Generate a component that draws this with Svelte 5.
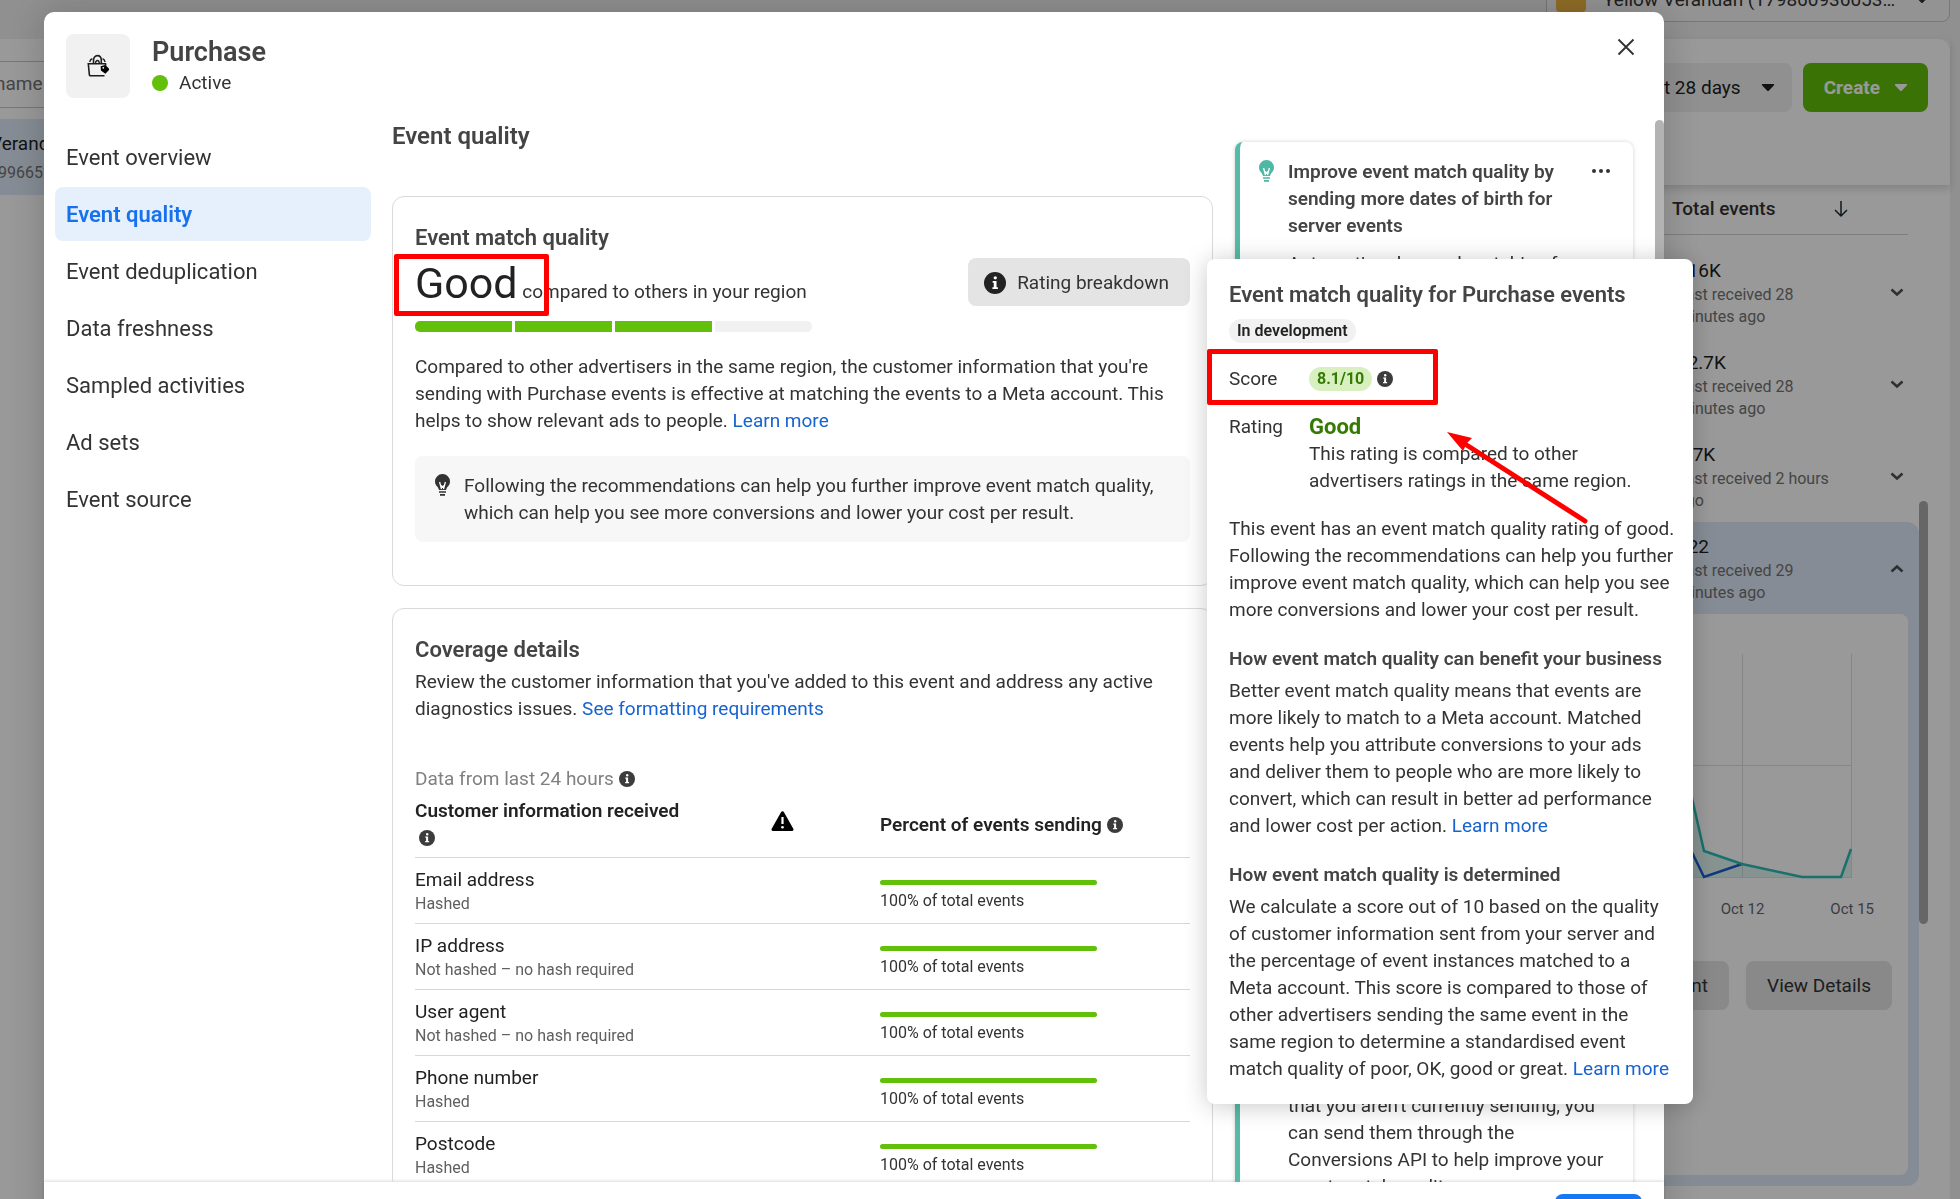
<script>
  const navItems = [
    'Event overview',
    'Event quality',
    'Event deduplication',
    'Data freshness',
    'Sampled activities',
    'Ad sets',
    'Event source',
  ]

  const coverage = [
    { name: 'Email address', note: 'Hashed', percent: 100 },
    { name: 'IP address', note: 'Not hashed – no hash required', percent: 100 },
    { name: 'User agent', note: 'Not hashed – no hash required', percent: 100 },
    { name: 'Phone number', note: 'Hashed', percent: 100 },
    { name: 'Postcode', note: 'Hashed', percent: 100 },
  ]

  const totals = [
    { count: '116K', received: 'Last received 28 minutes ago' },
    { count: '12.7K', received: 'Last received 28 minutes ago' },
    { count: '1.7K', received: 'Last received 2 hours ago' },
  ]

  let active = $state('Event quality')
</script>

{#snippet info(size = 16)}
  <svg class="info" width={size} height={size} viewBox="0 0 16 16" aria-hidden="true">
    <circle cx="8" cy="8" r="8" fill="currentColor" />
    <circle cx="8.2" cy="4.2" r="1.2" fill="#fff" />
    <path d="M6.3 6.6h2.8v4.5h1v1.2H6.1v-1.2h1V7.8h-.8z" fill="#fff" />
  </svg>
{/snippet}

{#snippet bulb()}
  <svg class="bulb" width="15" height="22" viewBox="0 0 15 22" aria-hidden="true">
    <path d="M7.5 0A7.4 7.4 0 0 0 0 7.4c0 2.800 1.500 4.600 3 6l1 2.600h7l1-2.600c1.500-1.400 3-3.200 3-6A7.400 7.400 0 0 0 7.500 0z" fill="currentColor" />
    <path d="M4.600 8l1.900 7.200M10.400 8l-1.900 7.200M6 11.500l1.500 1.500L9 11.500" fill="none" stroke="#fff" stroke-width="1.300" />
    <path d="M4 18h7M5 20.800h5" fill="none" stroke="currentColor" stroke-width="1.700" />
  </svg>
{/snippet}

{#snippet caret()}
  <svg width="14" height="9" viewBox="0 0 14 9" aria-hidden="true">
    <path d="M1.500 1h11a.8.8 0 0 1 .5 1.300L8 7.600a1.400 1.400 0 0 1-2 0L1 2.300A.8.8 0 0 1 1.500 1z" fill="currentColor" />
  </svg>
{/snippet}

{#snippet chevron(up = false)}
  <svg class="chevron" class:up width="14" height="9" viewBox="0 0 14 9" aria-hidden="true">
    <path d="M1.500 1.500L7 6.500l5.500-5" fill="none" stroke="#4b4f56" stroke-width="2.500" />
  </svg>
{/snippet}

<div class="page">
  <div class="sources">
    <div class="search">name or ID</div>
    <div class="source">
      <div class="source-name">Verandah</div>
      <div class="source-id">9966529</div>
    </div>
  </div>

  <div class="side">
    <button class="account">
      <span class="avatar"></span>
      <span class="account-name">Yellow Verandah (179860936053…</span>
      {@render caret()}
    </button>

    <div class="panel">
      <div class="toolbar">
        <button class="range">Last 28 days {@render caret()}</button>
        <button class="create">Create {@render caret()}</button>
      </div>

      <div class="list">
        <div class="list-head">
          Total events
          <svg width="14" height="18" viewBox="0 0 14 18" aria-hidden="true">
            <path d="M7 1v15M1 10l6 6 6-6" fill="none" stroke="#1c2b33" stroke-width="1.500" />
          </svg>
        </div>
        {#each totals as row}
          <div class="total">
            <div>
              <div class="count">{row.count}</div>
              <div class="received">{row.received}</div>
            </div>
            {@render chevron()}
          </div>
        {/each}
        <div class="expanded">
          <div class="total">
            <div>
              <div class="count">122</div>
              <div class="received">Last received 29 minutes ago</div>
            </div>
            {@render chevron(true)}
          </div>
          <div class="detail">
            <svg class="chart" width="240" height="226" viewBox="0 0 240 226" aria-hidden="true">
              <path d="M120.500 0v224M229.500 0v224M0 111.500h230M0 223.500h230" stroke="#dcdfe3" fill="none" stroke-width="1" />
              <path d="M60 100L82 197l38 13 60 13h39l10-28v28H60z" fill="#2abba7" opacity=".15" />
              <path d="M60 178L82 223l38-13" fill="none" stroke="#1a5fd0" stroke-width="2.500" />
              <path d="M60 100L82 197l38 13 60 13h39l10-28" fill="none" stroke="#2abbb4" stroke-width="2.500" />
            </svg>
            <div class="ticks"><span>Oct 12</span><span>Oct 15</span></div>
            <div class="detail-actions">
              <button>Test event</button>
              <button>View Details</button>
            </div>
          </div>
        </div>
      </div>
      <div class="panel-thumb"></div>
    </div>
  </div>
</div>

<div class="overlay">
  <div class="modal" role="dialog" aria-label="Purchase">
    <header>
      <div class="event-icon">
        <svg width="22" height="24" viewBox="0 0 22 24" fill="none" stroke="#1c1e21" stroke-width="1.600" aria-hidden="true">
          <path d="M17.500 21.800H3.400a1 1 0 0 1-1-.8L1.300 9.800h17.200l.2 1.700" />
          <path d="M6.500 9.800V6.500c0-3 1.600-4.900 3.900-4.900s3.900 1.900 3.900 4.900v3.300" />
          <path d="M8.500 9.500c.2-4 3.600-4 3.800 0M2.800 8c.3-1.800 1.200-3 2.600-3.300M15.500 4.700c1.400.3 2.200 1.500 2.600 3.300" stroke-width="1.400" />
          <path d="M14.500 12.800l3.700-.8 3.300 3.400-3.200 3.200-3.600-2.600z" fill="#000" stroke="#000" />
          <circle cx="16.300" cy="13.800" r=".9" fill="#fff" stroke="none" />
        </svg>
      </div>
      <div class="event-title">
        <h1>Purchase</h1>
        <div class="status"><span class="dot"></span>Active</div>
      </div>
      <button class="close" aria-label="Close">
        <svg width="18" height="18" viewBox="0 0 18 18" aria-hidden="true">
          <path d="M1.500 1.500l15 15M16.500 1.500l-15 15" stroke="#333" stroke-width="1.900" />
        </svg>
      </button>
    </header>

    <div class="body">
      <nav>
        {#each navItems as item}
          <button class:active={item === active} onclick={() => (active = item)}>{item}</button>
        {/each}
      </nav>

      <main>
        <h2>Event quality</h2>

        <section class="card match">
          <h3>Event match quality</h3>
          <div class="rating">
            <p><span class="grade">Good</span> compared to others in your region</p>
            <button class="breakdown">{@render info(22)} Rating breakdown</button>
            <span class="mark mark-grade"></span>
          </div>
          <div class="meter"><i class="on"></i><i class="on"></i><i class="on"></i><i></i></div>
          <p class="summary">
            Compared to other advertisers in the same region, the customer information that you're
            sending with Purchase events is effective at matching the events to a Meta account. This
            helps to show relevant ads to people. <a href="#learn">Learn more</a>
          </p>
          <div class="tip">
            {@render bulb()}
            <p>
              Following the recommendations can help you further improve event match quality, which
              can help you see more conversions and lower your cost per result.
            </p>
          </div>
        </section>

        <section class="card">
          <h3>Coverage details</h3>
          <p class="intro">
            Review the customer information that you've added to this event and address any active
            diagnostics issues. <a href="#format">See formatting requirements</a>
          </p>
          <p class="period">Data from last 24 hours {@render info()}</p>
          <table>
            <thead>
              <tr>
                <th class="col-name">Customer information received <span class="th-info">{@render info()}</span></th>
                <th class="col-warn" aria-label="Warnings">
                  <svg width="23" height="20" viewBox="0 0 23 20" aria-hidden="true">
                    <path d="M10 1.200a1.700 1.700 0 0 1 3 0l9.300 16.500a1.500 1.500 0 0 1-1.300 2.300H2a1.500 1.500 0 0 1-1.300-2.300z" fill="#000" />
                    <path d="M11.500 6v7" stroke="#fff" stroke-width="2.200" />
                    <circle cx="11.500" cy="16.200" r="1.300" fill="#fff" />
                  </svg>
                </th>
                <th>Percent of events sending {@render info()}</th>
              </tr>
            </thead>
            <tbody>
              {#each coverage as row}
                <tr>
                  <td>
                    <div class="name">{row.name}</div>
                    <div class="note">{row.note}</div>
                  </td>
                  <td></td>
                  <td class="share">
                    <div class="track"><div class="fill" style="width: {row.percent}%"></div></div>
                    <div class="percent">{row.percent}% of total events</div>
                  </td>
                </tr>
              {/each}
            </tbody>
          </table>
        </section>
      </main>

      <aside>
        {@render bulb()}
        <div class="advice">
          <h4>Improve event match quality by sending more dates of birth for server events</h4>
          <p>Automatic advanced matching for businesses</p>
          <p class="later">
            that you aren't currently sending, you can send them through the Conversions API to help
            improve your event match quality.
          </p>
        </div>
        <button class="more" aria-label="More">
          <svg width="18" height="4" viewBox="0 0 18 4" fill="#333" aria-hidden="true">
            <circle cx="2" cy="2" r="2" /><circle cx="9" cy="2" r="2" /><circle cx="16" cy="2" r="2" />
          </svg>
        </button>
      </aside>
      <div class="thumb"></div>
    </div>

    <footer><button class="done">Done</button></footer>

    <div class="popover">
      <h3>Event match quality for Purchase events</h3>
      <span class="badge">In development</span>
      <dl>
        <dt class="score">Score</dt>
        <dd class="score"><span class="pill">8.1/10</span>{@render info()}</dd>
        <dt>Rating</dt>
        <dd>
          <strong>Good</strong>
          <p>This rating is compared to other advertisers ratings in the same region.</p>
        </dd>
      </dl>
      <p class="lead">
        This event has an event match quality rating of good. Following the recommendations can help
        you further improve event match quality, which can help you see more conversions and lower
        your cost per result.
      </p>
      <h4>How event match quality can benefit your business</h4>
      <p>
        Better event match quality means that events are more likely to match to a Meta account.
        Matched events help you attribute conversions to your ads and deliver them to people who are
        more likely to convert, which can result in better ad performance and lower cost per action.
        <a href="#benefit">Learn more</a>
      </p>
      <h4>How event match quality is determined</h4>
      <p>
        We calculate a score out of 10 based on the quality of customer information sent from your
        server and the percentage of event instances matched to a Meta account. This score is
        compared to those of other advertisers sending the same event in the same region to
        determine a standardised event match quality of poor, OK, good or great.
        <a href="#determined">Learn more</a>
      </p>
      <span class="mark mark-score"></span>
      <svg class="arrow" width="144" height="98" viewBox="0 0 144 98" aria-hidden="true">
        <path d="M18 14L138 91" stroke="#f00" stroke-width="5" stroke-linecap="round" />
        <path d="M0 2L25 8 20 13 16 21z" fill="#f00" />
      </svg>
    </div>
  </div>
</div>

<style>
  :global(body) {
    overflow: hidden;
    background: #f0f0f0;
    color: #333;
    font-family: Roboto, 'Liberation Sans', sans-serif;
    font-size: 19px;
    line-height: 27px;
  }

  h1, h2, h3, h4, p, dl, dd {
    margin: 0;
  }

  h1, h2, h3, h4, th {
    font-weight: 600;
    color: #444;
  }

  h3 {
    font-size: 22px;
  }

  h4 {
    font-size: 19px;
  }

  a {
    color: #1763cf;
    text-decoration: none;
  }

  button {
    padding: 0;
    border: none;
    background: none;
    color: inherit;
    font: inherit;
    cursor: pointer;
  }

  .info {
    color: #3c3c3c;
    vertical-align: -2px;
  }

  /* page behind the dialog */
  .page {
    display: flex;
    justify-content: space-between;
    height: 100vh;
    overflow: hidden;
  }

  .sources {
    width: 200px;
    margin-top: 39px;
    padding-top: 22px;
    background: #fff;
    white-space: nowrap;
  }

  .search {
    height: 45px;
    line-height: 43px;
    border: 1px solid #c4c6c9;
    border-width: 1px 0;
    color: #737373;
    text-indent: -5px;
  }

  .source {
    height: 76px;
    margin-top: 11px;
    padding-top: 11px;
    box-sizing: border-box;
    background: #dfeaf8;
    text-indent: -10px;
    color: #1c1e21;
  }

  .source-id {
    margin-top: 2px;
    color: #737373;
    font-size: 16px;
    text-indent: -2px;
  }

  .side {
    display: flex;
    flex-direction: column;
    width: 404px;
    margin-right: 10px;
  }

  .account {
    display: flex;
    flex: none;
    align-items: center;
    gap: 17px;
    height: 46px;
    margin-top: -24px;
    padding: 0 20px 0 9px;
    box-sizing: border-box;
    border: 1px solid #c4c6c9;
    border-radius: 8px;
    background: #f6f6f6;
  }

  .avatar {
    width: 30px;
    height: 26px;
    border-radius: 4px;
    background: #f0b642;
  }

  .account-name {
    flex: 1;
    text-align: left;
    white-space: nowrap;
  }

  .panel {
    position: relative;
    flex: 1;
    margin-top: 17px;
    border-radius: 0 12px 0 0;
    background: #fff;
  }

  .toolbar {
    display: flex;
    justify-content: flex-end;
    gap: 11px;
    height: 146px;
    padding: 24px 22px 0 0;
    box-sizing: border-box;
    box-shadow: 0 4px 8px rgba(0, 0, 0, 0.15);
  }

  .range, .create {
    display: flex;
    align-items: center;
    height: 49px;
    border-radius: 8px;
  }

  .range {
    gap: 20px;
    padding: 0 17px;
    background: #f0f0f0;
    color: #1c1e21;
  }

  .create {
    gap: 14px;
    padding: 0 20px 0 21px;
    background: #62bf0a;
    color: #fff;
    font-weight: 700;
  }

  .list {
    padding-right: 31px;
  }

  .list-head {
    display: flex;
    align-items: center;
    justify-content: space-between;
    height: 50px;
    margin-right: 11px;
    padding: 0 60px 2px 126px;
    box-sizing: border-box;
    border-bottom: 1px solid #d0d2d5;
    color: #333;
    font-weight: 500;
  }

  .total {
    display: flex;
    justify-content: space-between;
    height: 92px;
    padding: 22px 15px 0 131px;
    box-sizing: border-box;
    color: #1c1e21;
  }

  .received {
    width: 165px;
    color: #737373;
    font-size: 16px;
    line-height: 22px;
  }

  .chevron {
    margin-top: 31px;
  }

  .up {
    transform: rotate(180deg);
  }

  .expanded {
    margin-top: 11px;
    padding-bottom: 11px;
    border-radius: 0 12px 12px 0;
    background: #dfeaf8;
  }

  .expanded .total {
    padding-top: 11px;
  }

  .detail {
    display: flex;
    flex-direction: column;
    align-items: flex-end;
    height: 561px;
    margin-right: 11px;
    padding-top: 40px;
    box-sizing: border-box;
    border-radius: 8px;
    background: #fff;
  }

  .chart {
    margin-right: 46px;
  }

  .ticks {
    display: flex;
    gap: 66px;
    margin: 16px 34px 0 0;
    font-size: 15px;
    color: #606770;
  }

  .detail-actions {
    display: flex;
    gap: 17px;
    margin: 38px 16px 0 0;
  }

  .detail-actions button {
    height: 49px;
    padding: 0 21px;
    border-radius: 8px;
    background: #e4e4e4;
  }

  .panel-thumb {
    position: absolute;
    top: 462px;
    right: 22px;
    width: 9px;
    height: 423px;
    border-radius: 5px;
    background: #aaa;
  }

  /* dialog */
  .overlay {
    position: fixed;
    inset: 0;
    padding: 12px 296px 0 44px;
    background: rgba(0, 0, 0, 0.4);
    overflow: hidden;
  }

  .modal {
    position: relative;
    display: flex;
    flex-direction: column;
    height: calc(100vh + 44px);
    border-radius: 10px;
    background: #fff;
    box-shadow: 0 0 40px rgba(0, 0, 0, 0.2);
  }

  header {
    display: flex;
    flex: none;
    height: 108px;
    padding: 22px 22px 0;
    box-sizing: border-box;
  }

  .event-icon {
    display: grid;
    place-items: center;
    width: 64px;
    height: 64px;
    border-radius: 8px;
    background: #f1f1f1;
  }

  .event-title {
    flex: 1;
    margin-left: 22px;
  }

  h1 {
    font-size: 27px;
    line-height: 36px;
  }

  .status {
    display: flex;
    align-items: center;
    gap: 11px;
    line-height: 25px;
  }

  .dot {
    width: 16px;
    height: 16px;
    border-radius: 50%;
    background: #62bf0a;
  }

  .close, .more {
    display: grid;
    place-items: center;
    align-self: flex-start;
    height: 26px;
  }

  .close {
    width: 32px;
  }

  .body {
    position: relative;
    display: flex;
    flex: 1;
    align-items: flex-start;
    min-height: 0;
    padding: 0 31px 0 11px;
    overflow: hidden;
  }

  nav {
    display: flex;
    flex-direction: column;
    gap: 3px;
    width: 316px;
    margin: 10px 21px 0 0;
  }

  nav button {
    height: 54px;
    padding-left: 11px;
    border-radius: 8px;
    font-size: 22px;
    text-align: left;
  }

  nav .active {
    background: #e6f0fd;
    color: #1771ed;
    font-weight: 600;
  }

  main {
    flex: 1;
    padding-top: 3px;
  }

  h2 {
    margin-bottom: 46px;
    font-size: 24px;
  }

  .card {
    margin-bottom: 22px;
    padding: 27px 22px 43px;
    border: 1px solid #dadada;
    border-radius: 12px;
  }

  .rating {
    position: relative;
    display: flex;
    justify-content: space-between;
    height: 48px;
    margin: 7px 0 15px;
  }

  .rating p {
    line-height: 50px;
  }

  .grade {
    color: #222;
    font-size: 43px;
  }

  .breakdown {
    height: 48px;
    padding: 0 21px 0 16px;
    border-radius: 8px;
    background: #e4e4e4;
  }

  .breakdown .info {
    margin-right: 6px;
    color: #222;
    vertical-align: -5px;
  }

  .mark {
    position: absolute;
    box-sizing: border-box;
    border: 5px solid #f00;
    border-radius: 2px;
  }

  .mark-grade {
    top: -4px;
    left: -21px;
    width: 155px;
    height: 62px;
  }

  .meter {
    display: flex;
    gap: 3px;
    width: 397px;
    height: 11px;
    border-radius: 5px;
    overflow: hidden;
  }

  .meter i {
    flex: 1;
    background: #f1f1f1;
  }

  .meter .on {
    background: #62bf0a;
  }

  .summary {
    margin: 21px 0 22px;
  }

  .tip {
    display: flex;
    gap: 14px;
    padding: 16px 20px;
    border-radius: 8px;
    background: #f7f7f7;
  }

  .bulb {
    flex: none;
    margin-top: 2px;
  }

  .intro {
    margin-top: 5px;
  }

  .period {
    margin-top: 43px;
    color: #808080;
  }

  table {
    width: 100%;
    border-collapse: collapse;
    table-layout: fixed;
  }

  tr {
    border-bottom: 1px solid #d8d8d8;
  }

  th {
    padding: 5px 0 6px;
    color: #222;
    text-align: left;
  }

  .col-name {
    width: 270px;
  }

  .col-warn {
    width: 195px;
    text-align: center;
  }

  .th-info {
    margin-left: 4px;
  }

  td {
    padding: 8px 0 9px;
    vertical-align: top;
  }

  .name {
    color: #222;
  }

  .note, .percent {
    font-size: 16px;
    line-height: 20px;
  }

  .note {
    margin-top: 1px;
    color: #606060;
  }

  .share {
    padding-top: 22px;
    padding-bottom: 0;
  }

  .track {
    width: 217px;
    height: 5px;
    margin-bottom: 6px;
    border-radius: 3px;
    background: #f1f1f1;
  }

  .fill {
    height: 100%;
    border-radius: 3px;
    background: #62bf0a;
  }

  aside {
    display: flex;
    gap: 14px;
    width: 398px;
    height: 1100px;
    margin: 22px 0 0 22px;
    padding: 16px 22px 0 19px;
    box-sizing: border-box;
    border-left: 5px solid #55baa7;
    border-radius: 8px;
    box-shadow: 0 0 4px rgba(0, 0, 0, 0.18);
  }

  aside .bulb {
    color: #4db8a4;
  }

  .advice {
    flex: 1;
  }

  .advice p {
    margin-top: 11px;
    margin-right: -32px;
  }

  .advice .later {
    margin-top: 788px;
  }

  .more {
    width: 20px;
  }

  .thumb {
    position: absolute;
    top: 0;
    right: 0;
    width: 9px;
    height: 700px;
    border-radius: 5px;
    background: #b3b3b3;
  }

  footer {
    display: flex;
    flex: none;
    justify-content: flex-end;
    height: 73px;
    padding: 12px 22px 0 0;
    box-sizing: border-box;
    box-shadow: 0 -1px 3px rgba(0, 0, 0, 0.15);
  }

  .done {
    width: 87px;
    height: 48px;
    border-radius: 8px;
    background: #1877f2;
    color: #fff;
  }

  /* rating details, floats over the dialog's right edge */
  .popover {
    position: absolute;
    top: 247px;
    right: -29px;
    width: 486px;
    padding: 22px 18px 22px 22px;
    box-sizing: border-box;
    border-radius: 8px;
    background: #fff;
    box-shadow: 0 2px 24px rgba(0, 0, 0, 0.22);
  }

  .badge, .pill {
    display: block;
    width: max-content;
    height: 24px;
    padding: 0 8px;
    border-radius: 12px;
    background: #f1f1f1;
    color: #222;
    font-size: 16px;
    font-weight: 600;
    line-height: 24px;
  }

  .badge {
    margin-top: 11px;
  }

  .pill {
    background: #d8f0c0;
    color: #357a04;
    font-weight: 700;
  }

  dl {
    display: grid;
    grid-template-columns: 80px 1fr;
    row-gap: 22px;
    margin: 24px 0 21px;
  }

  .score {
    display: flex;
    align-items: center;
    gap: 5px;
    height: 24px;
  }

  dt.score {
    height: 22px;
  }

  strong {
    display: block;
    color: #357a04;
    font-size: 22px;
  }

  .popover h4 {
    margin: 22px 0 5px;
  }

  .mark-score {
    top: 90px;
    left: 0;
    width: 231px;
    height: 56px;
  }

  .arrow {
    position: absolute;
    top: 171px;
    left: 240px;
  }
</style>
